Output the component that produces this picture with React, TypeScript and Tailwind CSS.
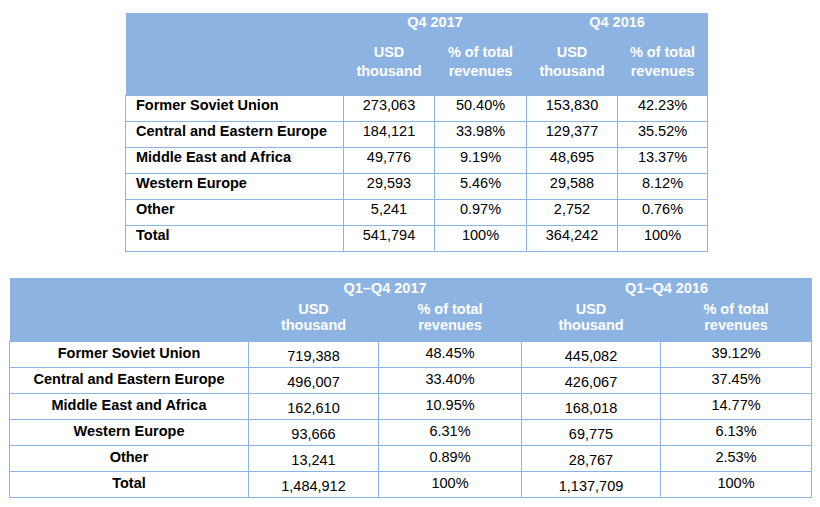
import React from "react"

type Row = { name: string; a: string; b: string; c: string; d: string }

const q4Rows: Row[] = [
    { name: "Former Soviet Union", a: "273,063", b: "50.40%", c: "153,830", d: "42.23%" },
    { name: "Central and Eastern Europe", a: "184,121", b: "33.98%", c: "129,377", d: "35.52%" },
    { name: "Middle East and Africa", a: "49,776", b: "9.19%", c: "48,695", d: "13.37%" },
    { name: "Western Europe", a: "29,593", b: "5.46%", c: "29,588", d: "8.12%" },
    { name: "Other", a: "5,241", b: "0.97%", c: "2,752", d: "0.76%" },
    { name: "Total", a: "541,794", b: "100%", c: "364,242", d: "100%" },
]

const fullYearRows: Row[] = [
    { name: "Former Soviet Union", a: "719,388", b: "48.45%", c: "445,082", d: "39.12%" },
    { name: "Central and Eastern Europe", a: "496,007", b: "33.40%", c: "426,067", d: "37.45%" },
    { name: "Middle East and Africa", a: "162,610", b: "10.95%", c: "168,018", d: "14.77%" },
    { name: "Western Europe", a: "93,666", b: "6.31%", c: "69,775", d: "6.13%" },
    { name: "Other", a: "13,241", b: "0.89%", c: "28,767", d: "2.53%" },
    { name: "Total", a: "1,484,912", b: "100%", c: "1,137,709", d: "100%" },
]

const cell = "border border-[#8db3e2] p-0 align-top"

function QuarterTable() {
    return (
        <table className="table-fixed border-collapse w-[582px] ml-[125px] text-[14.5px] text-black">
            <colgroup>
                <col className="w-[218px]" />
                <col className="w-[91px]" />
                <col className="w-[92px]" />
                <col className="w-[91px]" />
                <col className="w-[90px]" />
            </colgroup>
            <thead className="bg-[#8db3e2] text-white font-bold">
                <tr className="h-[20px]">
                    <th className="p-0" />
                    <th colSpan={2} className="p-0 pt-px leading-[17px] align-top">Q4 2017</th>
                    <th colSpan={2} className="p-0 pt-px leading-[17px] align-top">Q4 2016</th>
                </tr>
                <tr className="h-[62px]">
                    <th className="p-0" />
                    <th className="p-0 pt-[10px] leading-[19px] align-top">USD<br />thousand</th>
                    <th className="p-0 pt-[10px] leading-[19px] align-top">% of total<br />revenues</th>
                    <th className="p-0 pt-[10px] leading-[19px] align-top">USD<br />thousand</th>
                    <th className="p-0 pt-[10px] leading-[19px] align-top">% of total<br />revenues</th>
                </tr>
            </thead>
            <tbody className="leading-[17px]">
                {q4Rows.map((r) => (
                    <tr key={r.name} className="h-[26px]">
                        <td className={`${cell} pl-[10px] pt-px font-bold`}>{r.name}</td>
                        <td className={`${cell} pt-px text-center`}>{r.a}</td>
                        <td className={`${cell} pt-px text-center`}>{r.b}</td>
                        <td className={`${cell} pt-px text-center`}>{r.c}</td>
                        <td className={`${cell} pt-px text-center`}>{r.d}</td>
                    </tr>
                ))}
            </tbody>
        </table>
    )
}

function FullYearTable() {
    return (
        <table className="table-fixed border-collapse w-[802px] ml-[9px] text-[14.5px] text-black">
            <colgroup>
                <col className="w-[239px]" />
                <col className="w-[130px]" />
                <col className="w-[143px]" />
                <col className="w-[139px]" />
                <col className="w-[151px]" />
            </colgroup>
            <thead className="bg-[#8db3e2] text-white font-bold">
                <tr className="h-[20px]">
                    <th className="p-0" />
                    <th colSpan={2} className="p-0 pt-[2px] leading-[17px] align-top">Q1–Q4 2017</th>
                    <th colSpan={2} className="p-0 pt-[2px] leading-[17px] align-top">Q1–Q4 2016</th>
                </tr>
                <tr className="h-[44px]">
                    <th className="p-0" />
                    <th className="p-0 pt-[3px] leading-[16px] align-top">USD<br />thousand</th>
                    <th className="p-0 pt-[3px] leading-[16px] align-top">% of total<br />revenues</th>
                    <th className="p-0 pt-[3px] leading-[16px] align-top">USD<br />thousand</th>
                    <th className="p-0 pt-[3px] leading-[16px] align-top">% of total<br />revenues</th>
                </tr>
            </thead>
            <tbody className="leading-[17px]">
                {fullYearRows.map((r) => (
                    <tr key={r.name} className="h-[26px]">
                        <td className={`${cell} pt-[3px] text-center font-bold`}>{r.name}</td>
                        <td className={`${cell} pt-[6px] text-center`}>{r.a}</td>
                        <td className={`${cell} pt-[3px] text-center`}>{r.b}</td>
                        <td className={`${cell} pt-[6px] text-center`}>{r.c}</td>
                        <td className={`${cell} pt-[3px] text-center`}>{r.d}</td>
                    </tr>
                ))}
            </tbody>
        </table>
    )
}

export default function App() {
    return (
        <div className="w-[820px] h-[507px] bg-white font-['Liberation_Sans',Arial,sans-serif] pt-[13px]">
            <QuarterTable />
            <div className="h-[26px]" />
            <FullYearTable />
        </div>
    )
}
